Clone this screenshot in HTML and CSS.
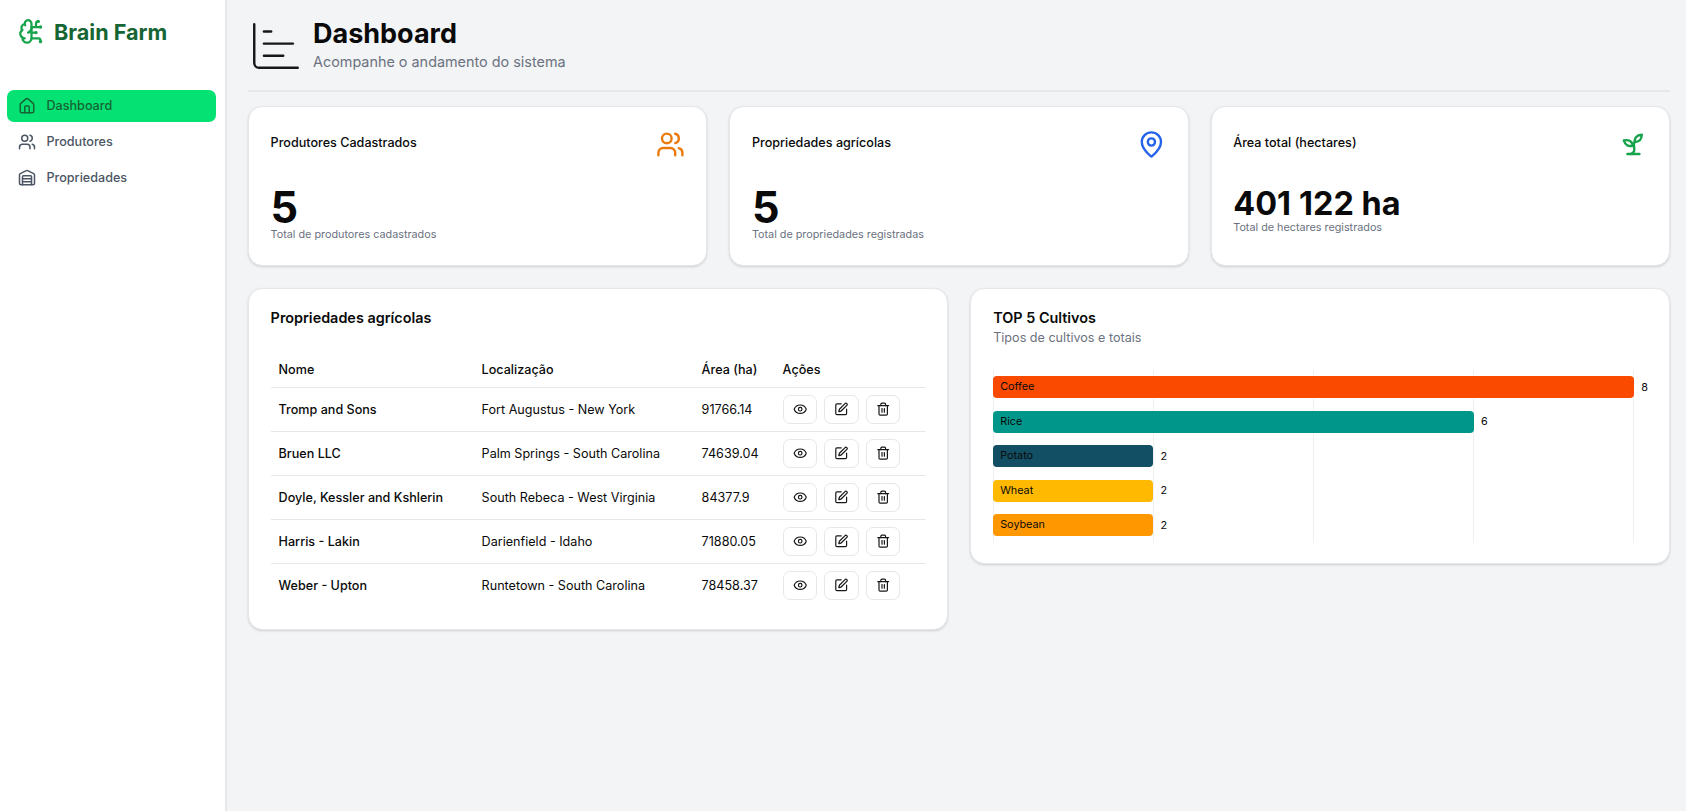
FILE: index.html
```html
<!DOCTYPE html>
<html lang="pt-BR">
<head>
  <meta charset="UTF-8">
  <title>Brain Farm - Dashboard</title>
  <link rel="stylesheet" href="styles.css">
</head>
<body>

<svg class="sprite" xmlns="http://www.w3.org/2000/svg">
  <symbol id="i-eye" viewBox="0 0 24 24">
    <path d="M2.062 12.348a1 1 0 0 1 0-.696 10.75 10.75 0 0 1 19.876 0 1 1 0 0 1 0 .696 10.75 10.75 0 0 1-19.876 0"/>
    <circle cx="12" cy="12" r="3"/>
  </symbol>
  <symbol id="i-pen" viewBox="0 0 24 24">
    <path d="M12 3H5a2 2 0 0 0-2 2v14a2 2 0 0 0 2 2h14a2 2 0 0 0 2-2v-7"/>
    <path d="M18.375 2.625a1 1 0 0 1 3 3l-9.013 9.014a2 2 0 0 1-.853.505l-2.873.84a.5.5 0 0 1-.62-.62l.84-2.873a2 2 0 0 1 .506-.852z"/>
  </symbol>
  <symbol id="i-trash" viewBox="0 0 24 24">
    <path d="M3 6h18"/>
    <path d="M19 6v14c0 1-1 2-2 2H7c-1 0-2-1-2-2V6"/>
    <path d="M8 6V4c0-1 1-2 2-2h4c1 0 2 1 2 2v2"/>
    <path d="M10 11v6"/>
    <path d="M14 11v6"/>
  </symbol>
</svg>

<div class="layout">
  <aside class="sidebar">
    <div class="brand">
      <svg class="brand-icon" viewBox="0 0 24 24">
        <path d="M12 5a3 3 0 1 0-5.997.125 4 4 0 0 0-2.526 5.77 4 4 0 0 0 .556 6.588A4 4 0 1 0 12 18Z"/>
        <path d="M9 13a4.5 4.5 0 0 0 3-4"/>
        <path d="M6.003 5.125A3 3 0 0 0 6.401 6.5"/>
        <path d="M3.477 10.896a4 4 0 0 1 .585-.396"/>
        <path d="M6 18a4 4 0 0 1-1.967-.516"/>
        <path d="M12 13h4"/>
        <path d="M12 18h6a2 2 0 0 1 2 2v1"/>
        <path d="M12 8h8"/>
        <path d="M16 8V5a2 2 0 0 1 2-2"/>
        <circle cx="16" cy="13" r=".5"/>
        <circle cx="18" cy="3" r=".5"/>
        <circle cx="20" cy="21" r=".5"/>
        <circle cx="20" cy="8" r=".5"/>
      </svg>
      <span class="brand-name">Brain Farm</span>
    </div>
    <nav class="nav">
      <a class="nav-item active" href="#">
        <svg class="nav-icon" viewBox="0 0 24 24">
          <path d="M15 21v-8a1 1 0 0 0-1-1h-4a1 1 0 0 0-1 1v8"/>
          <path d="M3 10a2 2 0 0 1 .709-1.528l7-5.999a2 2 0 0 1 2.582 0l7 5.999A2 2 0 0 1 21 10v9a2 2 0 0 1-2 2H5a2 2 0 0 1-2-2z"/>
        </svg>
        Dashboard
      </a>
      <a class="nav-item" href="#">
        <svg class="nav-icon" viewBox="0 0 24 24">
          <path d="M16 21v-2a4 4 0 0 0-4-4H6a4 4 0 0 0-4 4v2"/>
          <circle cx="9" cy="7" r="4"/>
          <path d="M22 21v-2a4 4 0 0 0-3-3.87"/>
          <path d="M16 3.13a4 4 0 0 1 0 7.75"/>
        </svg>
        Produtores
      </a>
      <a class="nav-item" href="#">
        <svg class="nav-icon" viewBox="0 0 24 24">
          <path d="M18 21V10a1 1 0 0 0-1-1H7a1 1 0 0 0-1 1v11"/>
          <path d="M22 19a2 2 0 0 1-2 2H4a2 2 0 0 1-2-2V8a2 2 0 0 1 1.132-1.803l7.95-3.974a2 2 0 0 1 1.837 0l7.95 3.974A2 2 0 0 1 22 8z"/>
          <path d="M6 13h12"/>
          <path d="M6 17h12"/>
        </svg>
        Propriedades
      </a>
    </nav>
  </aside>

  <main class="main">
    <header class="page-header">
      <svg class="page-icon" viewBox="0 0 24 24">
        <path d="M3 3v16a2 2 0 0 0 2 2h16"/>
        <path d="M7 16h8"/>
        <path d="M7 11h12"/>
        <path d="M7 6h3"/>
      </svg>
      <div>
        <h1 class="page-title">Dashboard</h1>
        <p class="page-subtitle">Acompanhe o andamento do sistema</p>
      </div>
    </header>

    <section class="stats">
      <div class="card stat-card">
        <div class="stat-top">
          <span class="stat-label">Produtores Cadastrados</span>
          <svg class="stat-icon orange" viewBox="0 0 24 24">
            <path d="M16 21v-2a4 4 0 0 0-4-4H6a4 4 0 0 0-4 4v2"/>
            <circle cx="9" cy="7" r="4"/>
            <path d="M22 21v-2a4 4 0 0 0-3-3.87"/>
            <path d="M16 3.13a4 4 0 0 1 0 7.75"/>
          </svg>
        </div>
        <div class="stat-value big">5</div>
        <div class="stat-note">Total de produtores cadastrados</div>
      </div>

      <div class="card stat-card">
        <div class="stat-top">
          <span class="stat-label">Propriedades agrícolas</span>
          <svg class="stat-icon blue" viewBox="0 0 24 24">
            <path d="M20 10c0 4.993-5.539 10.193-7.399 11.799a1 1 0 0 1-1.202 0C9.539 20.193 4 14.993 4 10a8 8 0 0 1 16 0"/>
            <circle cx="12" cy="10" r="3"/>
          </svg>
        </div>
        <div class="stat-value big">5</div>
        <div class="stat-note">Total de propriedades registradas</div>
      </div>

      <div class="card stat-card">
        <div class="stat-top">
          <span class="stat-label">Área total (hectares)</span>
          <svg class="stat-icon green" viewBox="0 0 24 24">
            <path d="M7 20h10"/>
            <path d="M10 20c5.5-2.5.8-6.4 3-10"/>
            <path d="M9.5 9.4c1.1.8 1.8 2.2 2.3 3.7-2 .4-3.5.4-4.8-.3-1.2-.6-2.3-1.9-3-4.2 2.8-.5 4.4 0 5.5.8z"/>
            <path d="M14.1 6a7 7 0 0 0-1.1 4c1.9-.1 3.3-.6 4.3-1.4 1-1 1.6-2.3 1.7-4.6-2.7.1-4 1-4.9 2z"/>
          </svg>
        </div>
        <div class="stat-value">401&#8239;<span class="thousands">122</span> ha</div>
        <div class="stat-note">Total de hectares registrados</div>
      </div>
    </section>

    <section class="panels">
      <div class="card table-card">
        <h2 class="card-title">Propriedades agrícolas</h2>
        <table class="farm-table">
          <thead>
            <tr>
              <th class="col-name">Nome</th>
              <th class="col-place">Localização</th>
              <th class="col-area">Área (ha)</th>
              <th class="col-actions">Ações</th>
            </tr>
          </thead>
          <tbody>
            <tr>
              <td class="farm-name">Tromp and Sons</td>
              <td>Fort Augustus - New York</td>
              <td>91766.14</td>
              <td><div class="actions">
                <button class="icon-btn"><svg viewBox="0 0 24 24"><use href="#i-eye"/></svg></button>
                <button class="icon-btn"><svg viewBox="0 0 24 24"><use href="#i-pen"/></svg></button>
                <button class="icon-btn"><svg viewBox="0 0 24 24"><use href="#i-trash"/></svg></button>
              </div></td>
            </tr>
            <tr>
              <td class="farm-name">Bruen LLC</td>
              <td>Palm Springs - South Carolina</td>
              <td>74639.04</td>
              <td><div class="actions">
                <button class="icon-btn"><svg viewBox="0 0 24 24"><use href="#i-eye"/></svg></button>
                <button class="icon-btn"><svg viewBox="0 0 24 24"><use href="#i-pen"/></svg></button>
                <button class="icon-btn"><svg viewBox="0 0 24 24"><use href="#i-trash"/></svg></button>
              </div></td>
            </tr>
            <tr>
              <td class="farm-name">Doyle, Kessler and Kshlerin</td>
              <td>South Rebeca - West Virginia</td>
              <td>84377.9</td>
              <td><div class="actions">
                <button class="icon-btn"><svg viewBox="0 0 24 24"><use href="#i-eye"/></svg></button>
                <button class="icon-btn"><svg viewBox="0 0 24 24"><use href="#i-pen"/></svg></button>
                <button class="icon-btn"><svg viewBox="0 0 24 24"><use href="#i-trash"/></svg></button>
              </div></td>
            </tr>
            <tr>
              <td class="farm-name">Harris - Lakin</td>
              <td>Darienfield - Idaho</td>
              <td>71880.05</td>
              <td><div class="actions">
                <button class="icon-btn"><svg viewBox="0 0 24 24"><use href="#i-eye"/></svg></button>
                <button class="icon-btn"><svg viewBox="0 0 24 24"><use href="#i-pen"/></svg></button>
                <button class="icon-btn"><svg viewBox="0 0 24 24"><use href="#i-trash"/></svg></button>
              </div></td>
            </tr>
            <tr>
              <td class="farm-name">Weber - Upton</td>
              <td>Runtetown - South Carolina</td>
              <td>78458.37</td>
              <td><div class="actions">
                <button class="icon-btn"><svg viewBox="0 0 24 24"><use href="#i-eye"/></svg></button>
                <button class="icon-btn"><svg viewBox="0 0 24 24"><use href="#i-pen"/></svg></button>
                <button class="icon-btn"><svg viewBox="0 0 24 24"><use href="#i-trash"/></svg></button>
              </div></td>
            </tr>
          </tbody>
        </table>
      </div>

      <div class="card chart-card">
        <h2 class="card-title">TOP 5 Cultivos</h2>
        <p class="card-subtitle">Tipos de cultivos e totais</p>
        <div class="chart-plot">
          <div class="bar-row">
            <div class="bar coffee" style="width: 100%">Coffee</div>
            <span class="bar-value">8</span>
          </div>
          <div class="bar-row">
            <div class="bar rice" style="width: 75%">Rice</div>
            <span class="bar-value">6</span>
          </div>
          <div class="bar-row">
            <div class="bar potato" style="width: 25%">Potato</div>
            <span class="bar-value">2</span>
          </div>
          <div class="bar-row">
            <div class="bar wheat" style="width: 25%">Wheat</div>
            <span class="bar-value">2</span>
          </div>
          <div class="bar-row">
            <div class="bar soybean" style="width: 25%">Soybean</div>
            <span class="bar-value">2</span>
          </div>
        </div>
      </div>
    </section>
  </main>
</div>

</body>
</html>
```

FILE: styles.css
```css
* {
  box-sizing: border-box;
}
body {
  margin: 0;
  font-family: Inter, "Noto Sans", sans-serif;
  background: #f3f4f6;
  color: #0a0a0a;
}
svg {
  fill: none;
  stroke: currentColor;
  stroke-width: 2;
  stroke-linecap: round;
  stroke-linejoin: round;
}
.sprite {
  display: none;
}
.layout {
  display: flex;
  min-height: 811px;
}

/* sidebar */
.sidebar {
  width: 227px;
  flex: none;
  background: white;
  border-right: 2px solid #e5e7eb;
  padding: 16px 9px 0 7px;
}
.brand {
  display: flex;
  align-items: center;
  gap: 9px;
  padding-left: 11px;
  height: 31px;
}
.brand-icon {
  width: 27px;
  height: 27px;
  color: #16a34a;
}
.brand-name {
  font-size: 21.6px;
  font-weight: 700;
  color: #166534;
}
.nav {
  display: flex;
  flex-direction: column;
  gap: 4px;
  margin-top: 43px;
}
.nav-item {
  display: flex;
  align-items: center;
  gap: 10.5px;
  height: 32px;
  padding: 0 0 1px 11px;
  border-radius: 7px;
  font-size: 12.6px;
  font-weight: 500;
  color: #4b5563;
  text-decoration: none;
}
.nav-item.active {
  background: #05e173;
  color: #166534;
}
.nav-icon {
  width: 18px;
  height: 18px;
}

/* main */
.main {
  flex: 1;
  min-width: 0;
  padding: 12px 16px 0 21px;
}
.page-header {
  display: flex;
  align-items: flex-start;
  gap: 8px;
  height: 80px;
  padding-top: 7px;
  border-bottom: 2px solid #e5e7eb;
}
.page-icon {
  width: 58px;
  height: 58px;
  stroke-width: 1;
  color: #171717;
  margin: -2px 0 0 -1px;
}
.page-title {
  margin: 0;
  font-size: 27px;
  line-height: 30px;
  font-weight: 700;
}
.page-subtitle {
  margin: 3px 0 0;
  font-size: 14.4px;
  line-height: 20px;
  color: #6b7280;
}

.card {
  background: white;
  border: 1px solid #e5e7eb;
  border-radius: 14.4px;
  box-shadow: 0 1px 3px rgba(0,0,0,0.1), 0 1px 2px rgba(0,0,0,0.06);
}
.stats {
  display: grid;
  grid-template-columns: repeat(3, 1fr);
  gap: 22px;
  margin-top: 14px;
}
.stat-card {
  height: 160px;
  padding: 21px 21.6px;
}
.stat-top {
  display: flex;
  justify-content: space-between;
  height: 58px;
}
.stat-label {
  font-size: 12.6px;
  font-weight: 500;
  line-height: 30px;
}
.stat-icon {
  width: 28.8px;
  height: 28.8px;
  margin-top: 2px;
}
.orange { color: #ea7a0c; }
.blue { color: #2563eb; }
.green { color: #16a34a; }
.stat-value {
  font-size: 32.4px;
  line-height: 35px;
  font-weight: 700;
}
.stat-value.big {
  font-size: 43.2px;
  line-height: 42px;
}
.thousands {
  margin-left: 3px;
}
.stat-note {
  font-size: 10.8px;
  line-height: 14px;
  color: #6b7280;
}

.panels {
  display: grid;
  grid-template-columns: 1fr 1fr;
  gap: 21.6px;
  align-items: start;
  margin-top: 22px;
}
.table-card {
  height: 342px;
  padding: 19px 21.6px;
}
.card-title {
  margin: 0;
  font-size: 14.4px;
  line-height: 20px;
  font-weight: 600;
}
.card-subtitle {
  margin: 0;
  font-size: 12.6px;
  line-height: 20px;
  color: #6b7280;
}

.farm-table {
  width: 655px;
  margin-top: 21px;
  border-collapse: collapse;
  table-layout: fixed;
  font-size: 12.6px;
}
.farm-table th {
  text-align: left;
  font-weight: 500;
  height: 38px;
  padding: 4px 7px 0;
}
.farm-table td {
  height: 44px;
  padding: 0 7px;
  border-top: 1px solid #e5e7eb;
}
.farm-table th.col-name,
.farm-table td.farm-name {
  padding-left: 8px;
}
.col-name { width: 204px; }
.col-place { width: 220px; }
.col-area { width: 81px; }
.col-actions { width: 150px; }
.farm-name {
  font-weight: 500;
}
.actions {
  display: flex;
  gap: 7.2px;
}
.icon-btn {
  display: flex;
  align-items: center;
  justify-content: center;
  width: 34.4px;
  height: 29px;
  padding: 0;
  background: white;
  border: 1px solid #e5e7eb;
  border-radius: 7px;
  color: #171717;
}
.icon-btn svg {
  width: 14.4px;
  height: 14.4px;
}

.chart-card {
  height: 276px;
  padding: 19px 21.6px 19px 22.4px;
}
.chart-plot {
  display: flex;
  flex-direction: column;
  gap: 12.5px;
  width: 641px;
  height: 173px;
  margin-top: 22px;
  padding-top: 6px;
  background-image: repeating-linear-gradient(90deg, #f0f0f0 0 1px, transparent 1px 160.1px);
}
.bar-row {
  display: flex;
  align-items: center;
  gap: 7px;
  height: 22px;
}
.bar {
  flex: none;
  height: 22px;
  padding-left: 7px;
  border-radius: 4px;
  font-size: 10.8px;
  line-height: 22px;
}
.bar-value {
  flex: none;
  font-size: 10.8px;
}
.coffee { background: #f94a00; }
.rice { background: #00968a; }
.potato { background: #124f65; }
.wheat { background: #ffb900; }
.soybean { background: #ff9800; }
```
